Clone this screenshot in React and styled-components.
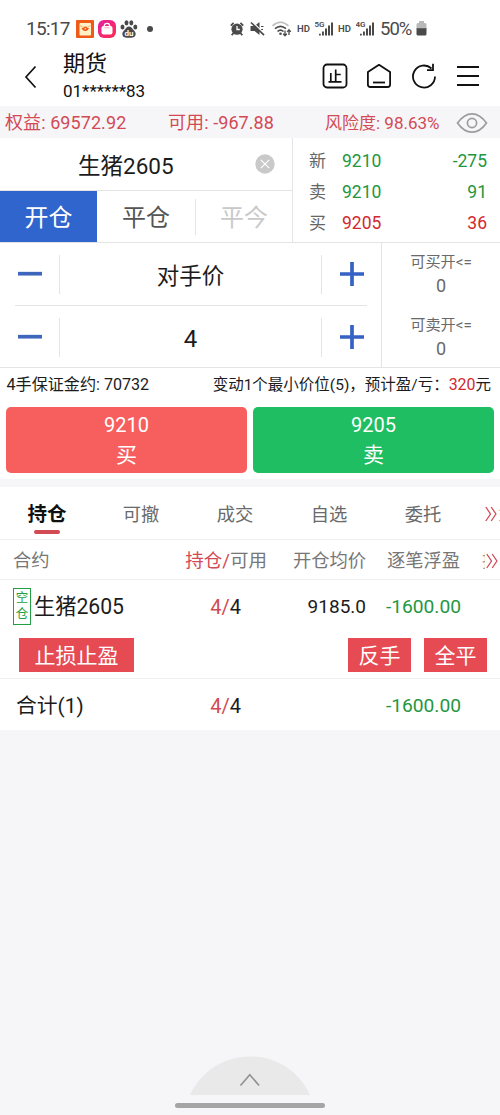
import React from 'react';
import styled, { createGlobalStyle } from 'styled-components';

const Global = createGlobalStyle`
  * { box-sizing: border-box; }
  html, body { margin: 0; padding: 0; background: #f6f6f8; }
  body { font-family: Roboto, "Noto Sans CJK SC", sans-serif; color: #1c1c1c; }
`;

const RED = '#d24a54';
const GREEN = '#23963f';
const LINE = '#e4e4e6';

const Screen = styled.main`
  width: 500px;
  height: 1115px;
  display: flex;
  flex-direction: column;
  background: #f6f6f8;
  overflow: hidden;
`;

const Text = styled.span`
  font-size: ${p => p.$size}px;
  line-height: ${p => p.$lh || 24}px;
  color: ${p => p.$color || 'inherit'};
  letter-spacing: ${p => p.$ls || 0}px;
  font-weight: ${p => p.$weight || 400};
  white-space: nowrap;
`;

const StatusBar = styled.div`
  height: 50px;
  flex: none;
  display: flex;
  align-items: center;
  padding: 7px 73px 0 26px;
  background: #fff;
  color: #4a4a4a;
  svg { display: block; flex: none; }
`;
const StatusApps = styled.div`
  display: flex;
  align-items: center;
  gap: 4px;
  margin-left: 6px;
`;
const StatusDot = styled.i`
  width: 6px;
  height: 6px;
  border-radius: 50%;
  background: #4a4a4a;
  margin-left: 9px;
`;
const StatusIcons = styled.div`
  display: flex;
  align-items: center;
  margin-left: auto;
`;
const Signal = styled.div`
  width: ${p => p.$w}px;
  margin-left: ${p => p.$ml}px;
`;

const Header = styled.header`
  height: 56px;
  flex: none;
  display: flex;
  align-items: center;
  background: #fff;
  color: #111;
  padding: 0 19px 2px 23px;
`;
const Account = styled.div`
  display: flex;
  flex-direction: column;
  margin-left: 24px;
`;
const HeaderIcons = styled.div`
  display: flex;
  align-items: center;
  margin-left: auto;
  gap: 18.500px;
  padding-bottom: 2px;
  svg { display: block; }
`;

const Funds = styled.div`
  height: 32px;
  flex: none;
  display: grid;
  grid-template-columns: 163px 157px 131px 1fr;
  align-items: center;
  padding: 2px 0 0 5px;
  background: #f6f6f9;
  color: ${RED};
  svg { display: block; margin-top: -1px; }
`;

const Quote = styled.section`
  height: 105px;
  flex: none;
  display: flex;
  background: #fff;
  border-bottom: 1px solid ${LINE};
`;
const Contract = styled.div`
  width: 293px;
  display: flex;
  flex-direction: column;
  border-right: 1px solid ${LINE};
`;
const SymbolRow = styled.div`
  height: 53px;
  display: flex;
  align-items: center;
  padding: 4px 17px 0 78px;
  border-bottom: 1px solid ${LINE};
  svg { display: block; margin: -4px 0 0 auto; }
`;
const Modes = styled.div`
  flex: 1;
  display: flex;
  align-items: center;
`;
const Mode = styled.div`
  height: ${p => (p.$active ? '100%' : '36px')};
  width: ${p => p.$w}px;
  display: flex;
  align-items: center;
  justify-content: center;
  padding-top: 3px;
  font-size: 24px;
  line-height: 36px;
  color: ${p => p.$color};
  background: ${p => (p.$active ? '#3065cd' : 'transparent')};
  border-left: ${p => (p.$divided ? `1px solid ${LINE}` : 'none')};
`;
const Prices = styled.div`
  flex: 1;
  display: grid;
  grid-template-rows: repeat(3, 31px);
  padding: 7px 13px 0 16px;
`;
const PriceRow = styled.div`
  display: grid;
  grid-template-columns: 33px 1fr auto;
  align-items: center;
  color: ${p => p.$color};
`;

const Order = styled.section`
  height: 125px;
  flex: none;
  display: flex;
  background: #fff;
  border-bottom: 1px solid ${LINE};
`;
const Steppers = styled.div`
  width: 382px;
  padding: 0 14px 0 15px;
  border-right: 1px solid ${LINE};
`;
const Stepper = styled.div`
  height: ${p => (p.$divided ? 63 : 62)}px;
  display: grid;
  grid-template-columns: 44px 263px 45px;
  align-items: center;
  border-bottom: ${p => (p.$divided ? `1px solid ${LINE}` : 'none')};
  svg { display: block; }
`;
const StepValue = styled.div`
  height: 39px;
  display: flex;
  align-items: center;
  justify-content: center;
  padding-top: 3px;
  border: solid ${LINE};
  border-width: 0 1px;
`;
const StepButton = styled.div`
  display: flex;
  justify-content: ${p => p.$side};
  padding: 0 2px;
`;
const Limits = styled.div`
  flex: 1;
  color: #6a6a6a;
  padding-top: 7px;
`;
const Limit = styled.div`
  height: 63px;
  display: flex;
  flex-direction: column;
  align-items: center;
`;

const Margin = styled.div`
  height: 39px;
  flex: none;
  display: flex;
  justify-content: space-between;
  padding: 5px 9px 0 6.500px;
  background: #fff;
`;
const Trade = styled.div`
  height: 72px;
  flex: none;
  display: grid;
  grid-template-columns: 1fr 1fr;
  gap: 6px;
  padding: 0 6px 6px;
  background: #fff;
`;
const TradeButton = styled.div`
  display: flex;
  flex-direction: column;
  align-items: center;
  padding-top: 3px;
  border-radius: 5px;
  color: #fff;
  background: ${p => p.$bg};
`;

const Positions = styled.section`
  margin-top: 8px;
  background: #fff;
  flex: none;
`;
const Tabs = styled.nav`
  height: 53px;
  display: grid;
  grid-template-columns: repeat(5, 94px) 1fr;
  border-bottom: 1px solid #f0f0f1;
`;
const Tab = styled.div`
  display: flex;
  flex-direction: column;
  align-items: center;
  padding-top: 14px;
  color: ${p => (p.$active ? '#111' : '#6a6a6a')};
  &::after {
    content: '';
    width: 26px;
    height: 4px;
    margin-top: 2px;
    border-radius: 2px;
    background: ${p => (p.$active ? RED : 'transparent')};
  }
`;
const More = styled.div`
  display: flex;
  align-items: center;
  justify-content: flex-end;
  gap: ${p => p.$gap || 0}px;
  padding-top: ${p => p.$pt || 0}px;
  padding-right: ${p => p.$pr || 0}px;
  overflow: hidden;
  svg { display: block; flex: none; }
`;
const Sliver = styled.span`
  width: ${p => p.$w}px;
  overflow: hidden;
  display: flex;
  justify-content: flex-start;
  font-size: 18px;
  line-height: 24px;
  color: #999;
`;
const Row = styled.div`
  height: ${p => p.$h}px;
  display: grid;
  grid-template-columns: 170px 97px 99px 95px 1fr;
  align-items: center;
  padding-top: ${p => p.$top || 0}px;
  border-bottom: ${p => (p.$line ? '1px solid #f0f0f1' : 'none')};
`;
const Cell = styled.div`
  display: flex;
  align-items: center;
  justify-content: ${p => p.$align || 'flex-end'};
  padding-left: ${p => p.$pl || 0}px;
  padding-right: ${p => p.$pr || 0}px;
`;
const Side = styled.div`
  width: 18px;
  height: 37px;
  display: flex;
  flex-direction: column;
  align-items: center;
  justify-content: center;
  border: 1px solid #23a045;
  color: #23a045;
  font-size: 12.500px;
  line-height: 16px;
  margin: -2px 3px 0 0;
`;
const Actions = styled.div`
  height: 47px;
  display: flex;
  gap: 13px;
  padding: 6px 13px 0 19px;
  border-bottom: 1px solid #f0f0f1;
`;
const Action = styled.div`
  width: ${p => p.$w}px;
  height: 34px;
  margin-right: ${p => (p.$first ? 'auto' : 0)};
  display: flex;
  align-items: center;
  justify-content: center;
  background: #e64a53;
  color: #fff;
  font-size: 21px;
  line-height: 30px;
  padding-top: 1px;
`;

const Bottom = styled.footer`
  margin-top: auto;
  display: flex;
  flex-direction: column;
  align-items: center;
  svg { display: block; }
`;
const HomeBar = styled.i`
  width: 150px;
  height: 5px;
  border-radius: 3px;
  background: #a5a5a6;
  margin: 8px 0 7px;
`;

const Orange = () => (
  <svg width="18" height="18" viewBox="0 0 18 18">
    <rect width="18" height="18" rx="1" fill="#ee5a17" />
    <rect x="3.500" y="3" width="11.500" height="12.500" rx="1" fill="#fff0c8" />
    <path d="M4 5.500q5.300 4 10.500 0" stroke="#f3b36b" fill="none" />
    <path d="M5.500 8h7.500q-1 3-3.700 3T5.500 8z" fill="#ee5a17" />
    <circle cx="9.300" cy="8.500" r="1.900" fill="#ee5a17" />
    <circle cx="9.300" cy="8.700" r=".8" fill="#fff0c8" />
  </svg>
);
const Bag = () => (
  <svg width="18" height="18" viewBox="0 0 18 18">
    <defs>
      <linearGradient id="bag" x1="0" y1="0" x2="1" y2="1">
        <stop offset="0" stopColor="#e321a0" />
        <stop offset="1" stopColor="#ff2b4c" />
      </linearGradient>
    </defs>
    <rect width="18" height="18" rx="6" fill="url(#bag)" />
    <rect x="3.500" y="6" width="11" height="8.500" rx="2" fill="#fff" />
    <path d="M6.300 7V6a2.700 2.700 0 0 1 5.400 0v1" stroke="#fff" strokeWidth="1.300" fill="none" />
    <path d="M6.300 7.800h5.400" stroke="#f58ab0" fill="none" strokeWidth=".7" />
  </svg>
);
const Paw = () => (
  <svg width="18" height="18" viewBox="0 0 18 18" fill="#4a4a4a">
    <ellipse cx="2.500" cy="7" rx="2" ry="2.500" />
    <ellipse cx="6.500" cy="2.800" rx="2" ry="2.600" />
    <ellipse cx="11.300" cy="2.800" rx="2" ry="2.600" />
    <ellipse cx="15.300" cy="7" rx="2" ry="2.500" />
    <path d="M9 6.500c2.500 0 3 2 4.500 3.500 1.800 1.700 2.500 3 2 5-.6 2.500-3 2.700-6.500 2.700S3 17.500 2.500 15c-.5-2 .2-3.300 2-5C6 8.500 6.500 6.500 9 6.500z" />
    <text x="9" y="16" textAnchor="middle" fontSize="8" fontWeight="700" fill="#fff">du</text>
  </svg>
);
const Alarm = () => (
  <svg width="14" height="14" viewBox="0 0 14 14">
    <circle cx="7" cy="7.200" r="5.600" fill="#4a4a4a" />
    <path d="M.8 3.600L3.600.9M13.200 3.600L10.400.9M3.500 11L1.700 13.300M10.500 11l1.800 2.300" stroke="#4a4a4a" strokeWidth="1.800" />
    <path d="M7 4v3.500h2.800" stroke="#fff" strokeWidth="1.300" fill="none" />
  </svg>
);
const Mute = () => (
  <svg width="15" height="15" viewBox="0 0 15 15">
    <path d="M.5 5h4l5-4v13l-5-4h-4z" fill="#4a4a4a" />
    <path d="M11 5.500h2.500M11 8.500h2" stroke="#4a4a4a" strokeWidth="1.200" />
    <path d="M2.700 1.200L14.500 13" stroke="#fff" strokeWidth="1.300" />
    <path d="M1 1.500L14 14.200" stroke="#4a4a4a" strokeWidth="1.700" />
  </svg>
);
const Wifi = () => (
  <svg width="20" height="16" viewBox="0 0 20 16" fill="none" strokeWidth="1.600">
    <path d="M.5 4.800Q8.500-2.300 16.500 4.800" stroke="#bbb" />
    <path d="M3 7.700Q8.500 3 14 7.700M5.500 10.500q3-2.600 6 0" stroke="#4a4a4a" />
    <circle cx="8.500" cy="12.700" r="1.300" fill="#4a4a4a" />
    <path d="M13 9.500v5m-1.800-1.800L13 14.700l1.800-2M17 14v-5m-1.800 1.900L17 8.700l1.800 2.200" stroke="#4a4a4a" strokeWidth="1.300" />
  </svg>
);
const Bars = ({ label, w }) => (
  <svg width={w} height="17" viewBox={`0 0 ${w} 17`} fill="#4a4a4a">
    <text x="-.5" y="7" fontSize="8" fontWeight="600" fontFamily="Roboto">{label}</text>
    <path d={`M${w - 14} 13.800h1.800v1.800h-1.800zM${w - 11} 11.500h1.900v4.100h-1.900zM${w - 8} 8.500h2v7.100h-2zM${w - 5} 5.500h2v10.100h-2zM${w - 2} 2.500h2v13.100h-2z`} />
  </svg>
);
const Battery = () => (
  <svg width="11" height="15" viewBox="0 0 11 15">
    <path d="M3 0h5v2h1q1.500 0 1.500 1.500V8H.5V3.500Q.5 2 2 2h1z" fill="#b9b9b9" />
    <path d="M.5 7.300h10V13q0 1.500-1.500 1.500H2Q.5 14.500.5 13z" fill="#4a4a4a" />
  </svg>
);
const Back = () => (
  <svg width="16" height="24" viewBox="0 0 16 24">
    <path d="M12.500 1.500L3 12l9.500 10.500" fill="none" stroke="#111" strokeWidth="1.700" />
  </svg>
);
const StopIcon = () => (
  <svg width="26" height="26" viewBox="0 0 26 26" fill="none" stroke="#111" strokeWidth="1.800">
    <rect x="1.500" y="1.500" width="23" height="23" rx="3.500" />
    <path d="M6.500 18.800h13M13.700 18.800V6.500M13.700 11.500h5M8.800 18.800V10" strokeWidth="1.700" />
  </svg>
);
const HomeIcon = () => (
  <svg width="26" height="26" viewBox="0 0 26 26" fill="none" stroke="#111" strokeWidth="1.800">
    <path d="M1.900 9L13 1.800 24.100 9V21.500Q24.100 24 21.600 24H4.400Q1.900 24 1.900 21.500z" strokeLinejoin="round" />
    <path d="M7 19.500h12" />
  </svg>
);
const Refresh = () => (
  <svg width="26" height="26" viewBox="0 0 26 26" fill="none" stroke="#111" strokeWidth="1.800">
    <path d="M24 13.500A11 11 0 1 1 20.500 5.500" />
    <path d="M16 7.200h6V.7" />
  </svg>
);
const Menu = () => (
  <svg width="26" height="26" viewBox="0 0 26 26" stroke="#111" strokeWidth="1.800">
    <path d="M2 4h22M2 13h22M2 22h22" />
  </svg>
);
const Eye = () => (
  <svg width="32" height="22" viewBox="0 0 32 22" fill="none" stroke="#9c9c9f" strokeWidth="1.700">
    <path d="M1.500 11Q8 1.800 16 1.800T30.500 11Q24 20.200 16 20.200T1.500 11z" />
    <circle cx="16" cy="11" r="4.600" />
  </svg>
);
const Clear = () => (
  <svg width="20" height="20" viewBox="0 0 20 20">
    <circle cx="10" cy="10" r="9.700" fill="#c9c9c9" />
    <path d="M5.800 5.800l8.400 8.400M14.200 5.800l-8.400 8.400" stroke="#fff" strokeWidth="1.200" />
  </svg>
);
const Minus = () => (
  <svg width="26" height="26" viewBox="0 0 26 26"><path d="M1 12.700h24" stroke="#3d66bd" strokeWidth="3.700" /></svg>
);
const Plus = () => (
  <svg width="26" height="26" viewBox="0 0 26 26"><path d="M1 13h24M13 1v24" stroke="#3562c4" strokeWidth="3.700" /></svg>
);
const Chevrons = () => (
  <svg width="12" height="16" viewBox="0 0 12 16" fill="none" stroke={RED} strokeWidth="1.300">
    <path d="M.8 1l4.700 7-4.700 7M6.200 1l4.700 7-4.700 7" />
  </svg>
);
const Dome = () => (
  <svg width="120" height="39" viewBox="0 0 120 39">
    <path d="M0 39C11 15 34 0.500 60 0.500s49 14.500 60 38.500z" fill="#e9e9ea" />
    <path d="M50.500 29.500l9.300-10.700 9.300 10.700" fill="none" stroke="#929293" strokeWidth="1.700" />
  </svg>
);

const quotes = [
  ['新', '9210', '-275', GREEN],
  ['卖', '9210', '91', GREEN],
  ['买', '9205', '36', '#d2292f'],
];

const Lots = () => (
  <Text $size={20}><Text $size={20} $color={RED}>4/</Text>4</Text>
);

export default function App() {
  return (
    <Screen>
      <Global />
      <StatusBar>
        <Text $size={19} $ls={-0.700}>15:17</Text>
        <StatusApps><Orange /><Bag /><Paw /></StatusApps>
        <StatusDot />
        <StatusIcons>
          <Alarm />
          <Signal $w={15} $ml={6}><Mute /></Signal>
          <Signal $w={20} $ml={7}><Wifi /></Signal>
          <Signal $w={13} $ml={5}><Text $size={9.500} $weight={600}>HD</Text></Signal>
          <Signal $w={18} $ml={5}><Bars label="5G" w={18} /></Signal>
          <Signal $w={13} $ml={5}><Text $size={9.500} $weight={600}>HD</Text></Signal>
          <Signal $w={18} $ml={5}><Bars label="4G" w={18} /></Signal>
          <Signal $w={33} $ml={6}><Text $size={18.500} $ls={-1}>50%</Text></Signal>
          <Signal $w={11} $ml={3}><Battery /></Signal>
        </StatusIcons>
      </StatusBar>

      <Header>
        <Back />
        <Account>
          <Text $size={22} $lh={28}>期货</Text>
          <Text $size={17} $lh={26}>01******83</Text>
        </Account>
        <HeaderIcons><StopIcon /><HomeIcon /><Refresh /><Menu /></HeaderIcons>
      </Header>

      <Funds>
        <Text $size={18} $ls={0.080}>权益: 69572.92</Text>
        <Text $size={18} $ls={0.080}>可用: -967.88</Text>
        <Text $size={17}>风险度: 98.63%</Text>
        <Eye />
      </Funds>

      <Quote>
        <Contract>
          <SymbolRow>
            <Text $size={22.500} $lh={30}>生猪2605</Text>
            <Clear />
          </SymbolRow>
          <Modes>
            <Mode $active $w={97} $color="#fff">开仓</Mode>
            <Mode $w={98} $color="#555">平仓</Mode>
            <Mode $divided $w={97} $color="#c9c9c9">平今</Mode>
          </Modes>
        </Contract>
        <Prices>
          {quotes.map(([name, price, vol, color]) => (
            <PriceRow key={name} $color={color}>
              <Text $size={17} $color="#666">{name}</Text>
              <Text $size={17.500}>{price}</Text>
              <Text $size={17.500}>{vol}</Text>
            </PriceRow>
          ))}
        </Prices>
      </Quote>

      <Order>
        <Steppers>
          {['对手价', '4'].map((value, i) => (
            <Stepper key={value} $divided={i === 0}>
              <StepButton $side="flex-start"><Minus /></StepButton>
              <StepValue><Text $size={i ? 24 : 22.500} $lh={30}>{value}</Text></StepValue>
              <StepButton $side="flex-end"><Plus /></StepButton>
            </Stepper>
          ))}
        </Steppers>
        <Limits>
          {['可买开<=', '可卖开<='].map(label => (
            <Limit key={label}>
              <Text $size={15.200}>{label}</Text>
              <Text $size={18}>0</Text>
            </Limit>
          ))}
        </Limits>
      </Order>

      <Margin>
        <Text $size={16.100}>4手保证金约: 70732</Text>
        <Text $size={15.500}>变动1个最小价位(5)，预计盈/亏：<Text $size={15.900} $color="#d2292f">320</Text>元</Text>
      </Margin>
      <Trade>
        <TradeButton $bg="#f75f5f">
          <Text $size={20} $lh={30}>9210</Text>
          <Text $size={21} $lh={31}>买</Text>
        </TradeButton>
        <TradeButton $bg="#20be62">
          <Text $size={20} $lh={30}>9205</Text>
          <Text $size={21} $lh={31}>卖</Text>
        </TradeButton>
      </Trade>

      <Positions>
        <Tabs>
          {['持仓', '可撤', '成交', '自选', '委托'].map((name, i) => (
            <Tab key={name} $active={i === 0}>
              <Text $size={i ? 18.300 : 19.500} $lh={i ? 28 : 27} $weight={i ? 400 : 700}>{name}</Text>
            </Tab>
          ))}
          <More $gap={2} $pt={2}><Chevrons /><Sliver $w={1.500}>盘</Sliver></More>
        </Tabs>
        <Row $h={40} $line $top={2}>
          <Cell $align="flex-start" $pl={13}><Text $size={18.300} $color="#777">合约</Text></Cell>
          <Cell><Text $size={18.500} $color="#777"><Text $size={18.500} $color={RED}>持仓/</Text>可用</Text></Cell>
          <Cell><Text $size={18.300} $color="#777">开仓均价</Text></Cell>
          <Cell $pr={1}><Text $size={18.300} $color="#777">逐笔浮盈</Text></Cell>
          <More $gap={1} $pr={2}><Sliver $w={3}>持</Sliver><Chevrons /></More>
        </Row>
        <Row $h={52} $top={2}>
          <Cell $align="flex-start" $pl={13}>
            <Side><span>空</span><span>仓</span></Side>
            <Text $size={21.200} $lh={30}>生猪2605</Text>
          </Cell>
          <Cell $pr={26}><Lots /></Cell>
          <Cell><Text $size={19}>9185.0</Text></Cell>
          <Cell><Text $size={19.200} $color={GREEN}>-1600.00</Text></Cell>
        </Row>
        <Actions>
          <Action $first $w={115}>止损止盈</Action>
          <Action $w={63}>反手</Action>
          <Action $w={63}>全平</Action>
        </Actions>
        <Row $h={51} $top={2}>
          <Cell $align="flex-start" $pl={16}><Text $size={20.800} $lh={30}>合计(1)</Text></Cell>
          <Cell $pr={26}><Lots /></Cell>
          <Cell />
          <Cell><Text $size={19.200} $color={GREEN}>-1600.00</Text></Cell>
        </Row>
      </Positions>

      <Bottom>
        <Dome />
        <HomeBar />
      </Bottom>
    </Screen>
  );
}
